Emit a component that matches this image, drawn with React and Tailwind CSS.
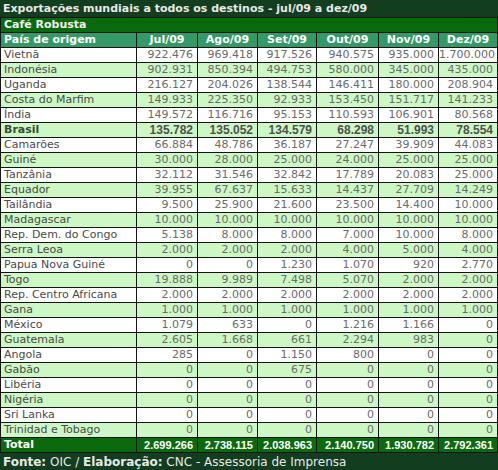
const months = ["Jul/09", "Ago/09", "Set/09", "Out/09", "Nov/09", "Dez/09"];

const rows = [
  ["Vietnã", "922.476", "969.418", "917.526", "940.575", "935.000", "1.700.000"],
  ["Indonésia", "902.931", "850.394", "494.753", "580.000", "345.000", "435.000"],
  ["Uganda", "216.127", "204.026", "138.544", "146.411", "180.000", "208.904"],
  ["Costa do Marfim", "149.933", "225.350", "92.933", "153.450", "151.717", "141.233"],
  ["Índia", "149.572", "116.716", "95.153", "110.593", "106.901", "80.568"],
  ["Brasil", "135.782", "135.052", "134.579", "68.298", "51.993", "78.554"],
  ["Camarões", "66.884", "48.786", "36.187", "27.247", "39.909", "44.083"],
  ["Guiné", "30.000", "28.000", "25.000", "24.000", "25.000", "25.000"],
  ["Tanzânia", "32.112", "31.546", "32.842", "17.789", "20.083", "25.000"],
  ["Equador", "39.955", "67.637", "15.633", "14.437", "27.709", "14.249"],
  ["Tailândia", "9.500", "25.900", "21.600", "23.500", "14.400", "10.000"],
  ["Madagascar", "10.000", "10.000", "10.000", "10.000", "10.000", "10.000"],
  ["Rep. Dem. do Congo", "5.138", "8.000", "8.000", "7.000", "10.000", "8.000"],
  ["Serra Leoa", "2.000", "2.000", "2.000", "4.000", "5.000", "4.000"],
  ["Papua Nova Guiné", "0", "0", "1.230", "1.070", "920", "2.770"],
  ["Togo", "19.888", "9.989", "7.498", "5.070", "2.000", "2.000"],
  ["Rep. Centro Africana", "2.000", "2.000", "2.000", "2.000", "2.000", "2.000"],
  ["Gana", "1.000", "1.000", "1.000", "1.000", "1.000", "1.000"],
  ["México", "1.079", "633", "0", "1.216", "1.166", "0"],
  ["Guatemala", "2.605", "1.668", "661", "2.294", "983", "0"],
  ["Angola", "285", "0", "1.150", "800", "0", "0"],
  ["Gabão", "0", "0", "675", "0", "0", "0"],
  ["Libéria", "0", "0", "0", "0", "0", "0"],
  ["Nigéria", "0", "0", "0", "0", "0", "0"],
  ["Sri Lanka", "0", "0", "0", "0", "0", "0"],
  ["Trinidad e Tobago", "0", "0", "0", "0", "0", "0"],
];

const totals = ["2.699.266", "2.738.115", "2.038.963", "2.140.750", "1.930.782", "2.792.361"];

function DataRow({ row, index }) {
  const bg = index % 2 === 1 ? "bg-[#cdf7c5]" : "bg-white";
  const bold = row[0] === "Brasil";
  return (
    <>
      <div className={`${bg} h-[14px] leading-[14px] pl-[3px] whitespace-nowrap overflow-hidden ${bold ? "font-bold text-[#3b4a3b]" : "text-[#4a4a4a]"}`}>
        {row[0]}
      </div>
      {row.slice(1).map((v, i) => (
        <div
          key={i}
          className={
            bold
              ? `${bg} h-[14px] leading-[14px] pr-[4px] text-right font-bold text-[12px] font-['Liberation_Sans',Arial,sans-serif] text-[#505050]`
              : `${bg} h-[14px] leading-[14px] pr-[4px] text-right text-[#6b6b6b]`
          }
        >
          {v}
        </div>
      ))}
    </>
  );
}

export default function App() {
  return (
    <div className="w-[498px] h-[470px] bg-white font-['DejaVu_Sans',Verdana,sans-serif] text-[11px]">
      {/* titulo */}
      <div className="h-[17px] leading-[17px] bg-[#123d1e] text-[#e8e8e8] font-bold pl-[3px] whitespace-nowrap">
        Exportações mundiais a todos os destinos - jul/09 a dez/09
      </div>

      <div className="grid grid-cols-[135px_60px_59px_58px_61px_59px_58px] gap-px p-px bg-[#141414]">
        <div className="col-span-7 h-[14px] leading-[14px] bg-[#0b690e] text-[#f0f0f0] font-bold pl-[3px]">
          Café Robusta
        </div>

        <div className="h-[14px] leading-[14px] bg-[#339966] text-white font-bold pl-[3px] whitespace-nowrap">
          País de origem
        </div>
        {months.map((m) => (
          <div key={m} className="h-[14px] leading-[14px] bg-[#339966] text-white font-bold text-center">
            {m}
          </div>
        ))}

        {rows.map((row, i) => (
          <DataRow key={row[0]} row={row} index={i} />
        ))}

        <div className="h-[14px] leading-[14px] bg-[#0b690e] text-white font-bold pl-[3px]">Total</div>
        {totals.map((t, i) => (
          <div
            key={i}
            className="h-[14px] leading-[14px] bg-[#0b690e] text-white font-bold text-right pr-[4px] font-['Liberation_Sans',Arial,sans-serif]"
          >
            {t}
          </div>
        ))}
      </div>

      {/* rodapé */}
      <div className="h-[18px] leading-[18px] bg-[#123d1e] text-[#e8e8e8] text-[12px] pl-[3px] whitespace-nowrap">
        <span className="font-bold">Fonte:</span> OIC / <span className="font-bold">Elaboração:</span> CNC - Assessoria de Imprensa
      </div>
    </div>
  );
}
